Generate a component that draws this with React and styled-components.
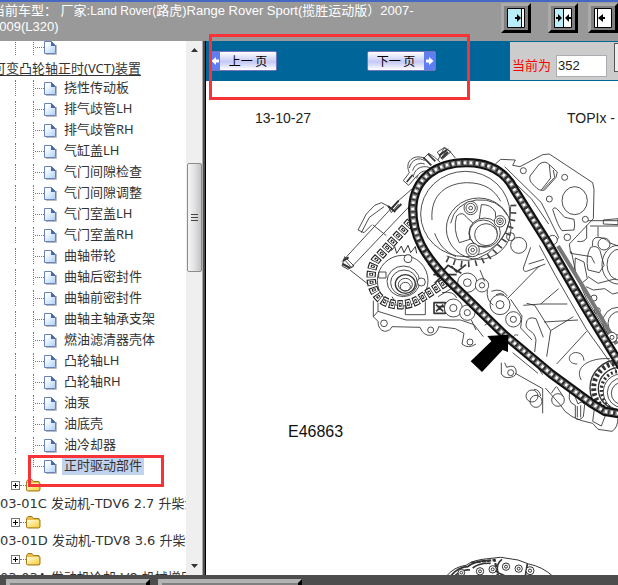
import React from "react";
import styled, { createGlobalStyle } from "styled-components";

const Global = createGlobalStyle`
  * { box-sizing: border-box; }
  body { margin: 0; background: #fff; }
  button, input { font: inherit; margin: 0; }
`;

const Page = styled.div`
  display: flex;
  flex-direction: column;
  height: 100vh;
  overflow: hidden;
  font-family: "Liberation Sans", "Noto Sans CJK SC", sans-serif;
  font-size: 13px;
  color: #222;
`;

const Header = styled.header`
  flex: none;
  display: flex;
  justify-content: space-between;
  height: 41px;
  border-top: 2px solid #4468c4;
  background: #999;
  overflow: hidden;
`;

const Title = styled.h1`
  flex: none;
  margin: 0 0 0 -8px;
  padding-top: 1px;
  font-size: 13px;
  line-height: 16px;
  font-weight: 400;
  color: #fff;
  white-space: nowrap;
`;

const LatinText = styled.span`
  font-size: 12px;
`;

const LayoutButtons = styled.div`
  display: flex;
  gap: 10px;
  padding-top: 1px;
`;

const LayoutButton = styled.button`
  width: 30px;
  height: 30px;
  padding: 0;
  margin-right: ${(p) => (p.$spaced ? "7px" : "0")};
  display: grid;
  place-items: center;
  border: 3px solid;
  border-color: #aaa #000 #000 #aaa;
  background: #808080;
`;

const Body = styled.div`
  flex: 1;
  min-height: 0;
  display: flex;
`;

const Sidebar = styled.nav`
  flex: 0 1 186px;
  min-width: 0;
  overflow: hidden;
  font-family: "Noto Sans", "Noto Sans CJK SC", sans-serif;
  color: #333;
`;

const Tree = styled.ul`
  list-style: none;
  margin: -4px 0 0;
  padding: 0;
`;

const FileRow = styled.li`
  position: relative;
  display: flex;
  align-items: flex-start;
  height: 21px;
  padding-left: 15px;
`;

const Guide = styled.span`
  flex: none;
  width: ${(p) => p.$width};
  height: ${(p) => (p.$half ? "9px" : "16px")};
  margin-top: 2px;
  border-left: 1px dotted #777;
`;

const Branch = styled.span`
  flex: none;
  width: ${(p) => p.$width};
  margin-top: 10px;
  border-top: 1px dotted #777;
`;

const FileLink = styled.a`
  margin-left: 5px;
  padding: 0 2px;
  line-height: 19px;
  color: inherit;
  text-decoration: none;
  white-space: nowrap;
  background: ${(p) => (p.$selected ? "#c1d2ee" : "none")};
`;

const SectionRow = styled.li`
  height: 20px;
  margin-left: -7px;
  line-height: 20px;
  white-space: nowrap;
  a { color: inherit; text-underline-offset: 2px; }
`;

const FolderRow = styled.li`
  display: flex;
  align-items: center;
  height: 18px;
  padding: 0 0 2px 11px;
`;

const Expander = styled.button`
  flex: none;
  width: 9px;
  height: 9px;
  padding: 0;
  border: 1px solid #777;
  background: linear-gradient(#000, #000) center / 5px 1px no-repeat,
    linear-gradient(#000, #000) center / 1px 5px no-repeat, #fff;
`;

const FolderBranch = styled.span`
  width: 6px;
  border-top: 1px dotted #777;
`;

const GroupRow = styled.li`
  height: 19px;
  line-height: 18px;
  font-family: "DejaVu Sans", "Noto Sans CJK SC", sans-serif;
  white-space: nowrap;
  a { color: inherit; text-decoration: none; }
`;

const Highlight = styled.div`
  position: absolute;
  z-index: 2;
  left: ${(p) => p.$left};
  top: ${(p) => p.$top};
  width: ${(p) => p.$width};
  height: ${(p) => p.$height};
  border: 3px solid #f83337;
  pointer-events: none;
`;

const ScrollTrack = styled.div`
  flex: none;
  width: 16px;
  display: flex;
  flex-direction: column;
  align-items: center;
  justify-content: space-between;
  padding: 7px 0;
  background: #efefef;
`;

const Thumb = styled.div`
  width: 15px;
  height: 109px;
  margin-bottom: 182px;
  display: grid;
  place-items: center;
  border: 1px solid #8c8c8c;
  border-radius: 2px;
  background: linear-gradient(90deg, #f5f5f5, #e2e2e2 50%, #c4c4c8);
`;

const Divider = styled.div`
  flex: none;
  width: 4px;
  background: linear-gradient(90deg, #aaa 1px, #4d4d4d 1px 3px, #000 3px);
`;

const Main = styled.main`
  flex: 1;
  min-width: 0;
  display: flex;
  flex-direction: column;
`;

const Toolbar = styled.div`
  flex: none;
  position: relative;
  height: 40px;
  display: flex;
  align-items: center;
  justify-content: space-between;
  background: #069;
`;

const Pager = styled.div`
  display: flex;
  gap: 90px;
  padding-left: 6px;
`;

const PageButton = styled.button`
  width: ${(p) => (p.$next ? "69px" : "65px")};
  height: 20px;
  padding: 0;
  display: flex;
  align-items: stretch;
  border: 1px solid #7474bd;
  border-left: ${(p) => (p.$next ? "1px solid #7474bd" : "0")};
  border-radius: ${(p) => (p.$next ? "2px" : "0 2px 2px 0")};
  background: linear-gradient(#fff, #c4c8f7 55%, #fff);
  font-family: "Noto Sans CJK SC", sans-serif;
  font-size: 12px;
  line-height: 18px;
  color: #000;
  overflow: hidden;
`;

const PageLabel = styled.span`
  flex: 1;
  white-space: nowrap;
`;

const Jump = styled.form`
  align-self: stretch;
  flex: none;
  width: 108px;
  margin: 1px 0;
  display: flex;
  align-items: center;
  gap: 7px;
  padding-left: 2px;
  overflow: hidden;
  background: #ccc;
`;

const JumpLabel = styled.label`
  flex: none;
  color: #f00;
  font-size: 13px;
  line-height: 20px;
`;

const JumpInput = styled.input`
  flex: none;
  width: 51px;
  height: 22px;
  margin-top: 9px;
  padding: 0 1px;
  border: 1px solid #abadb3;
  background: #fff;
  color: #222;
  font-size: 13px;
`;

const JumpButton = styled.button`
  flex: none;
  align-self: flex-start;
  width: 40px;
  height: 29px;
  margin-top: 1px;
  border: 1px solid #555;
  background: #eee;
`;

const JumpField = styled.div`
  flex: none;
  display: flex;
  align-items: baseline;
  gap: 5px;
`;

const Sheet = styled.article`
  flex: 1;
  min-height: 0;
  overflow: hidden;
  background: #fff;
`;

const SheetHeader = styled.div`
  display: flex;
  justify-content: space-between;
  padding: 28px 3px 3px 49px;
  font-size: 14px;
  line-height: 18px;
  color: #222;
`;

const Figure = styled.svg`
  display: block;
  width: 412px;
  height: 445px;
`;

const Footer = styled.footer`
  flex: none;
  display: flex;
  gap: 8px;
  height: 10px;
  padding: 4px 6px 0;
  overflow: hidden;
  background: #4d4d4d;
`;

const FooterButton = styled.button`
  width: 144px;
  height: 24px;
  flex: none;
  border: 4px solid;
  border-color: #b3b3b3 #000 #000 #b3b3b3;
  background: #808080;
`;

const files = [
  "挠性传动板", "排气歧管LH", "排气歧管RH", "气缸盖LH", "气门间隙检查",
  "气门间隙调整", "气门室盖LH", "气门室盖RH", "曲轴带轮", "曲轴后密封件",
  "曲轴前密封件", "曲轴主轴承支架", "燃油滤清器壳体", "凸轮轴LH", "凸轮轴RH",
  "油泵", "油底壳", "油冷却器", "正时驱动部件",
];

const groups = [
  "03-01C 发动机-TDV6 2.7 升柴油",
  "03-01D 发动机-TDV8 3.6 升柴油",
  "03-03A 发动机冷却-V8 机械增压",
];

const FileIcon = () => (
  <svg width="13" height="18" viewBox="0 0 13 18" aria-hidden="true">
    <defs>
      <linearGradient id="sheet" x1="0" y1="0" x2="1" y2="1">
        <stop offset="0.2" stopColor="#fff" />
        <stop offset="1" stopColor="#a9cffb" />
      </linearGradient>
    </defs>
    <path d="M2 17.500h10.500V8" fill="none" stroke="#bbb" />
    <path d="M.5 4.500h7l4 4v8H.5z" fill="url(#sheet)" stroke="#6782bd" />
    <path d="M7 4v5h5z" fill="#496ab0" />
  </svg>
);

const FolderIcon = () => (
  <svg width="15" height="14" viewBox="0 0 15 14" aria-hidden="true">
    <defs>
      <linearGradient id="folder" x1="0" y1="0" x2="1" y2="1">
        <stop offset="0.1" stopColor="#fffbd0" />
        <stop offset="1" stopColor="#f5cf3c" />
      </linearGradient>
    </defs>
    <path d="M.5 12V3.500L2 1.500h4l1.500 2h5.500v1.500h1v7l-1 1h-11.500z" fill="#e8bd4a" stroke="#a77a1c" />
    <path d="M1 5h12v7H1z" fill="url(#folder)" />
  </svg>
);

const LayoutIcon = ({ kind }) => (
  <svg width="18" height="20" viewBox="0 0 18 20" aria-hidden="true">
    <path d="M.5.5h17v19H.5z" fill={kind === "left" ? "#b9effb" : "#fff"} stroke="#000" />
    {kind === "right" && (
      <>
        <path d="M3.500 1v18" stroke="#000" />
        <path d="M4 10l5-4v3h2v2H9v3z" />
      </>
    )}
    {kind === "split" && (
      <>
        <path d="M1 1h8v18H1z" fill="#b9effb" />
        <path d="M9.500 1v18" stroke="#000" />
        <path d="M8 10L4 6v3H2v2h2v3zM11 10l4-4v3h2v2h-2v3z" />
      </>
    )}
    {kind === "left" && (
      <>
        <path d="M15 1h2v18h-2z" fill="#fff" />
        <path d="M14.500 1v18" stroke="#000" />
        <path d="M14 10L10 6v3H8v2h2v3z" />
      </>
    )}
  </svg>
);

const PageArrow = ({ next }) => (
  <svg width={next ? 11 : 8} height="18" viewBox={next ? "0 0 11 18" : "3 0 8 18"} aria-hidden="true">
    <path d="M0 0h11v18H0z" fill="#5f7ff0" />
    <path
      d={next ? "M2 7.500h3V5l4.500 4L5 13v-2.500H2z" : "M10 7.500H7V5L2.500 9 7 13v-2.500h3z"}
      fill="#fff"
    />
  </svg>
);

const ScrollArrow = ({ down }) => (
  <svg width="7" height="4" viewBox="0 0 7 4" aria-hidden="true">
    <path d={down ? "M0 0h7L3.500 4z" : "M0 4h7L3.500 0z"} fill="#333" />
  </svg>
);

const Grip = () => (
  <svg width="7" height="9" viewBox="0 0 7 9" aria-hidden="true">
    <path d="M0 1.500h7M0 4.500h7M0 7.500h7" stroke="#444" />
  </svg>
);

const Chain = ({ d, width }) => (
  <g fill="none" strokeLinejoin="round">
    <path d={d} stroke="#111" strokeWidth={width} />
    <path d={d} stroke="#8a8a8a" strokeWidth={width - 13} />
    <path d={d} stroke="#333" strokeWidth={width - 12} strokeDasharray="4 14 7 11" />
    <path d={d} stroke="#fff" strokeWidth={width - 20} strokeDasharray="7 11" strokeDashoffset="-7" />
  </g>
);

const Bolt = ({ x, y, r }) => (
  <g>
    <circle cx={x} cy={y} r={r} fill="#fff" />
    <circle cx={x} cy={y} r={r * 0.4} />
  </g>
);

const mainChain =
  "M850 822L800 814L760 790L640 702L500 585L330 420C258 345 224 290 224 205C228 110 300 68 385 68C450 68 500 90 530 150L630 310L740 500L850 680";
const smallChain =
  "M218 245L112 362C90 400 98 450 125 474C155 500 205 500 240 480L335 418";

const EngineDrawing = () => (
  <Figure viewBox="-396 -30 1236 1335" role="img" aria-label="E46863">
    <g fill="none" stroke="#333" strokeWidth="2.600" strokeLinejoin="round">
      {/* cylinder head cover, upper left */}
      <path d="M12 365L178 185L224 145M38 384L215 198M20 350L48 378L30 388L12 378zM36 390L92 434M22 362l18 20" />
      <path d="M14 372l22 12M16 362l16-10M162 204l20-22M168 214l22-22M150 198l22 18" strokeWidth="6" />
      <path d="M60 270L85 222L110 196L130 188L150 198L160 218L182 192M70 278L94 232L138 200M60 270l18 8 24-24M105 255l40 32" />
      <path d="M196 122L214 98C198 64 228 42 258 54L272 40L290 52L306 66M196 122l16 14 26-30M214 84c6-26 30-34 46-22M224 92c5-18 20-26 36-20M226 112c3-32 36-40 58-24M236 116c4-20 24-28 42-20" />
      <path d="M206 126l18-22M256 52l24 24M270 42l22 22" strokeWidth="5" />
      <path d="M300 60L318 24L334 32L352 54M310 54l20-28M320 22l-22 14 14 22 26-22z" />
      <path d="M304 46l22-16M312 54l18-18" strokeWidth="6" />

      {/* rear plate */}
      <path d="M472 72L488 58L532 60L524 76L546 80L614 44L634 42L764 128L768 148L766 236L694 312L698 340L760 350L770 370" />
      <path d="M576 108L604 72Q622 60 634 74L658 96L654 112L620 150Q604 156 588 136Q572 124 576 108zM634 74l4 40-28 36M646 90l4 22-34 36" />
      <ellipse cx="710" cy="182" rx="38" ry="42" />
      <path d="M644 208Q650 198 660 210L680 232L708 238Q712 256 708 270L672 272Q660 260 644 208z" />
      <path d="M500 80L610 188L662 292L650 310M500 100l80 76 52 76" />
      <circle cx="556" cy="92" r="9" /><circle cx="680" cy="112" r="9" />
      <circle cx="634" cy="177" r="9" /><circle cx="688" cy="292" r="10" />
      <circle cx="742" cy="238" r="9" />
      <path d="M750 242h90M756 258h84M796 240l44-4v18l-44-2zM746 256v38q-8 14-28 10M780 260v30" />

      {/* right hand engine block */}
      <path d="M764 318q-4-26 16-26t34 16l26 10M758 322q20-8 28 10l12 44-14 22-34-8q-8-40 8-68M712 354l26 12 10 50-20 16-18-42zM750 410l30 20 54-14M744 440l22 10 34-4 24 16 16-4" />
      <circle cx="798" cy="312" r="18" />
      <ellipse cx="840" cy="374" rx="48" ry="58" /><ellipse cx="845" cy="374" rx="38" ry="47" />
      <ellipse cx="840" cy="548" rx="46" ry="46" /><ellipse cx="846" cy="550" rx="36" ry="36" />
      <circle cx="768" cy="474" r="9" /><circle cx="778" cy="512" r="9" />
      <path d="M700 334L716 410L746 478L820 598" />
      <path d="M660 318L740 448L836 612" strokeWidth="12" stroke="#777" />
      <Bolt x="822" y="592" r="15" />

      {/* block structure inside the chain loop */}
      <path d="M604 316L652 406L744 566L836 694" />
      <path d="M578 322L556 384Q556 396 566 394L622 372M572 372l46-14M604 378L510 474M556 496L608 492L662 446M618 546L720 540M566 490L590 496L638 572L706 530M638 572L626 650M656 672L746 574M608 492h80" />
      <path d="M594 536q-28-10-30 18c0 20 24 14 30 46l-4 36M594 536l22 56M540 586c-12-6-20 8-8 16M518 478L552 528L548 564L582 600" />
      <path d="M730 720c-22-36 20-68 86-64M718 672c-36 0-28-38 0-34q18 2 20 24" />
      <circle cx="542" cy="316" r="24" fill="#fff" /><circle cx="518" cy="290" r="12" />
      <circle cx="644" cy="300" r="14" fill="#fff" />

      {/* camshaft sprocket */}
      <ellipse cx="382" cy="222" rx="134" ry="128" />
      <path d="M282 240C276 160 330 130 386 128C440 128 470 150 488 184M290 280c12 32 30 54 64 70" />
      <ellipse cx="422" cy="266" rx="97" ry="92" />
      <path d="M338 250q12-60 76-70 66-6 94 46" />
      <path d="M356 228Q374 212 386 232L406 250Q388 268 396 298L364 308Q344 268 356 228z" fill="#fff" />
      <path d="M430 194Q458 192 472 216L474 246L424 236z" fill="#fff" />
      <ellipse cx="440" cy="278" rx="47" ry="44" fill="#fff" />
      <ellipse cx="436" cy="280" rx="42" ry="40" />
      <ellipse cx="444" cy="284" rx="34" ry="33" fill="#fff" />
      <Bolt x="398" y="204" r="20" /><Bolt x="398" y="204" r="14" />
      <Bolt x="486" y="244" r="17" /><Bolt x="486" y="244" r="10" />
      <Bolt x="404" y="330" r="20" /><Bolt x="404" y="330" r="13" />
      <path d="M526 194q5 90-70 154-62 46-136 6" strokeWidth="18" stroke="#444" strokeDasharray="5 17" />
      <path d="M518 200q4 82-68 140-58 38-124 8" />

      {/* exhaust camshaft sprocket */}
      <circle cx="194" cy="422" r="76" />
      <path d="M160 332l10-12 6 20 14-22 8 20 12-22 8 22 14-18 4 20" strokeWidth="3" />
      <ellipse cx="196" cy="424" rx="49" ry="46" /><ellipse cx="198" cy="428" rx="40" ry="38" />
      <ellipse cx="202" cy="432" rx="30" ry="28" strokeWidth="4" />
      <ellipse cx="202" cy="434" rx="21" ry="19" /><ellipse cx="202" cy="440" rx="15" ry="13" />
      <circle cx="210" cy="356" r="12" fill="#fff" /><circle cx="250" cy="426" r="12" fill="#fff" />
      <path d="M122 396h22v18h-22zM162 470l12 20M202 498v26h60v-40" />
      <path d={smallChain} stroke="#222" strokeWidth="28" strokeDasharray="18 6" />
      <path d={smallChain} stroke="#fff" strokeWidth="21" strokeDasharray="13 11" strokeDashoffset="-3" />
      <path d={smallChain} stroke="#222" strokeWidth="12" strokeDasharray="8 16" strokeDashoffset="-5" />
      <path d={smallChain} stroke="#fff" strokeWidth="5" strokeDasharray="4 20" strokeDashoffset="-7" />
      <path d="M270 370l30 40 30-34 40 24M286 404h70M340 378l16 18 28-22M290 430l30-30" strokeWidth="5" />

      {/* lower gasket and bosses */}
      <path d="M106 482V530L120 544Q120 570 140 574Q158 572 162 560L246 562Q256 588 278 586Q298 582 302 560L352 566L378 580L372 612Q390 628 414 612M120 488v26l84 26h164l40 14 28 36M106 530l14-16M400 540l14 30M440 556l20-14 14 30" />
      <circle cx="138" cy="550" r="10" /><circle cx="278" cy="570" r="9" /><circle cx="396" cy="606" r="9" />
      <path d="M312 458q36-6 44 16M300 470L350 440" />
      <path d="M288 488h34v32h-34zM294 494l22 20M316 494l-22 20M296 500h22" strokeWidth="5" />
      <Bolt x="346" y="504" r="27" /><Bolt x="388" y="518" r="23" />
      <Bolt x="388" y="428" r="29" /><Bolt x="432" y="436" r="20" />
      <Bolt x="486" y="494" r="30" /><Bolt x="526" y="538" r="23" />
      <path d="M426 390l14 34M448 450q-4 30 18 46M460 454q30-12 48 14M474 464q14-8 24 0" />

      {/* crankshaft sprocket */}
      <circle cx="840" cy="744" r="84" strokeWidth="4" />
      <circle cx="842" cy="744" r="75" strokeWidth="15" strokeDasharray="8 7" />
      <circle cx="844" cy="746" r="63" strokeWidth="4" />
      <circle cx="846" cy="750" r="56" strokeWidth="10" strokeDasharray="6 7" />
      <circle cx="850" cy="756" r="54" fill="#fff" />
      <circle cx="852" cy="758" r="44" />
      <circle cx="854" cy="760" r="34" />

      {/* sump edge */}
      <path d="M490 668v34q8 14 28 10t16-22-28-8l-6-14M524 638L600 700M536 626L584 660L614 704M532 700L614 746V820M622 744L668 796Q688 836 764 850L780 868L822 874Q840 864 840 830M656 740l20 30M640 760l14-20" />
      <circle cx="518" cy="698" r="9" />
      <circle cx="582" cy="768" r="18" /><circle cx="594" cy="784" r="18" /><circle cx="660" cy="780" r="19" />
      <path d="M588 748q16 0 20 20M700 742q-18 44 12 54v38q10 12 24-4l4-36q-8-14-20-2zM718 798v34M728 796v36M770 800l-6 44 26 14 14-36" />
    </g>

    <Chain d={mainChain} width={28} />

    <path d="M398 664L460 604L448 588L510 584V636L494 630L432 696z" fill="#000" />

    <text x="-150" y="891" fontFamily="Liberation Sans, sans-serif" fontSize="48" fill="#111">
      E46863
    </text>

    {/* next drawing, starting at the foot of the sheet */}
    <g fill="none" stroke="#333" strokeWidth="3">
      <path d="M324 1310Q348 1280 384 1276Q404 1260 450 1256L488 1252L540 1260L572 1272Q614 1280 646 1310" />
      <path d="M338 1308q24-28 52-28M350 1308q22-22 46-18M386 1282q26-22 70-20M404 1284q20-16 54-14M492 1258q-20 16-12 40l22 10h60l6-36" strokeWidth="5" />
      <path d="M400 1268L470 1260L480 1308" strokeWidth="7" strokeDasharray="12 4" />
      <Bolt x="370" y="1298" r="10" /><Bolt x="426" y="1294" r="11" />
      <Bolt x="464" y="1288" r="11" /><Bolt x="504" y="1280" r="11" />
      <Bolt x="542" y="1286" r="11" /><Bolt x="576" y="1292" r="12" />
    </g>
  </Figure>
);

export default function App() {
  return (
    <Page>
      <Global />
      <Header>
        <Title>
          当前车型： 厂家:<LatinText>Land Rover(</LatinText>路虎)Range Rover
          Sport(揽胜运动版）2007-
          <br />
          2009(L320)
        </Title>
        <LayoutButtons>
          <LayoutButton type="button" aria-label="展开目录" $spaced>
            <LayoutIcon kind="left" />
          </LayoutButton>
          <LayoutButton type="button" aria-label="并列显示">
            <LayoutIcon kind="split" />
          </LayoutButton>
          <LayoutButton type="button" aria-label="展开内容">
            <LayoutIcon kind="right" />
          </LayoutButton>
        </LayoutButtons>
      </Header>

      <Body>
        <Sidebar aria-label="目录">
          <Tree>
            <FileRow>
              <Guide $width="18px" />
              <Guide $width="2px" />
              <Branch $width="9px" />
              <FileIcon />
            </FileRow>
            <SectionRow>
              <a href="#vct">可变凸轮轴正时(VCT)装置</a>
            </SectionRow>
            {files.map((name, i) => {
              const last = i === files.length - 1;
              return (
                <FileRow key={name}>
                  <Guide $width="18px" />
                  <Guide $width="2px" $half={last} />
                  <Branch $width="9px" />
                  <FileIcon />
                  <FileLink href={`#file-${i}`} $selected={last}>{name}</FileLink>
                  {last && <Highlight $left="28px" $top="-1px" $width="136px" $height="32px" />}
                </FileRow>
              );
            })}
            {groups.map((name, i) => (
              <React.Fragment key={name}>
                <FolderRow>
                  <Expander type="button" aria-label="展开" />
                  <FolderBranch />
                  <FolderIcon />
                </FolderRow>
                <GroupRow>
                  <a href={`#group-${i}`}>{name}</a>
                </GroupRow>
              </React.Fragment>
            ))}
          </Tree>
        </Sidebar>
        <ScrollTrack aria-hidden="true">
          <ScrollArrow />
          <Thumb>
            <Grip />
          </Thumb>
          <ScrollArrow down />
        </ScrollTrack>
        <Divider />

        <Main>
          <Toolbar>
            <Pager>
              <PageButton type="button">
                <PageArrow />
                <PageLabel>上一 页</PageLabel>
              </PageButton>
              <PageButton type="button" $next>
                <PageLabel>下一 页</PageLabel>
                <PageArrow next />
              </PageButton>
            </Pager>
            <Jump>
              <JumpField>
                <JumpLabel htmlFor="page">当前为</JumpLabel>
                <JumpInput id="page" type="text" defaultValue="352" />
              </JumpField>
              <JumpButton type="button" aria-label="转到" />
            </Jump>
            <Highlight $left="3px" $top="-7px" $width="261px" $height="66px" />
          </Toolbar>
          <Sheet>
            <SheetHeader>
              <span>13-10-27</span>
              <span>TOPIx -</span>
            </SheetHeader>
            <EngineDrawing />
          </Sheet>
        </Main>
      </Body>

      <Footer>
        <FooterButton type="button" aria-label="目录" />
        <FooterButton type="button" aria-label="内容" />
      </Footer>
    </Page>
  );
}
